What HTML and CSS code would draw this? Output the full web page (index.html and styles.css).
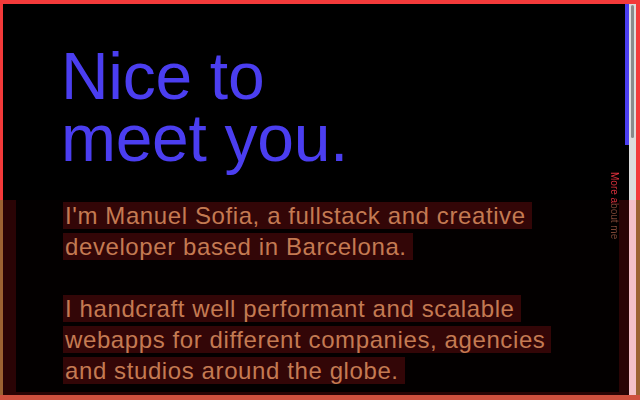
FILE: index.html
```html
<!DOCTYPE html>
<html lang="en">
<head>
<meta charset="utf-8">
<title>Nice to meet you</title>
<link rel="stylesheet" href="styles.css">
</head>
<body>
<div class="screen">
  <div class="inner">
    <main class="col">
      <section class="hero">
        <h1 class="title">Nice to<br>meet you.</h1>
      </section>
      <section class="about">
        <div class="about-inner">
          <p class="copy"><span class="mark">I'm Manuel Sofia, a fullstack and creative developer based in Barcelona.</span></p>
          <p class="copy"><span class="mark">I handcraft well performant and scalable webapps for different companies, agencies and studios around the globe.</span></p>
        </div>
      </section>
    </main>
    <div class="progress"></div>
    <div class="track"><div class="thumb"></div></div>
  </div>
  <a class="more" href="#about">More about me</a>
</div>
</body>
</html>
```

FILE: styles.css
```css
* { box-sizing: border-box; }
html, body { margin: 0; padding: 0; background: #000; }
body { width: 640px; height: 400px; overflow: hidden; font-family: "Liberation Sans", Arial, sans-serif; }

.screen {
  position: relative;
  width: 640px;
  height: 400px;
  border-style: solid;
  border-width: 4px 4px 5px 3px;
  border-image-source: linear-gradient(to bottom, #f33a3a 0, #f33a3a 200px, #9c6232 200px, #9c6232 395px, #cf503e 395px);
  border-image-slice: 4 4 5 3;
}

.inner {
  display: flex;
  height: 100%;
  background: #000;
}

.col {
  flex: 1;
  min-width: 0;
  display: flex;
  flex-direction: column;
}

.hero {
  flex: 0 0 196px;
  padding: 41px 0 0 58px;
  background: #000;
}

.title {
  margin: 0;
  font-weight: 400;
  font-size: 66px;
  line-height: 62px;
  color: #4b3ef0;
  letter-spacing: -0.3px;
}

.about {
  flex: 1 1 auto;
  min-height: 0;
  display: flex;
  padding: 0 6px 3px 13px;
  background: #2a0405;
}

.about-inner {
  flex: 1;
  overflow: hidden;
  background: #030000;
  padding: 0 0 0 47px;
}

.copy {
  margin: 0 0 31px;
  width: 505px;
  font-size: 24px;
  line-height: 31px;
  color: #c47a52;
  letter-spacing: 0.6px;
}

.mark {
  background: #330607;
  padding: 0 6px 0 2px;
  -webkit-box-decoration-break: clone;
  box-decoration-break: clone;
}

.progress {
  width: 4px;
  background: linear-gradient(to bottom, #4b3ef0 0, #4b3ef0 141px, #000 141px, #000 196px, #2a0405 196px);
}

.track {
  width: 7px;
  padding: 1px 1px 0 1px;
  background: linear-gradient(to bottom, #dcdcdc 0, #dcdcdc 196px, #f4c0c8 196px);
}

.thumb {
  height: 133px;
  margin: 0 1px;
  border-radius: 2px;
  background: #8a8a8a;
}

.more {
  position: absolute;
  left: 606px;
  top: 168px;
  writing-mode: vertical-rl;
  font-size: 10px;
  line-height: 10px;
  text-decoration: none;
  background: linear-gradient(to bottom, #e0303c 0, #e0303c 32px, #7a4434 32px);
  -webkit-background-clip: text;
  background-clip: text;
  color: transparent;
}
```
